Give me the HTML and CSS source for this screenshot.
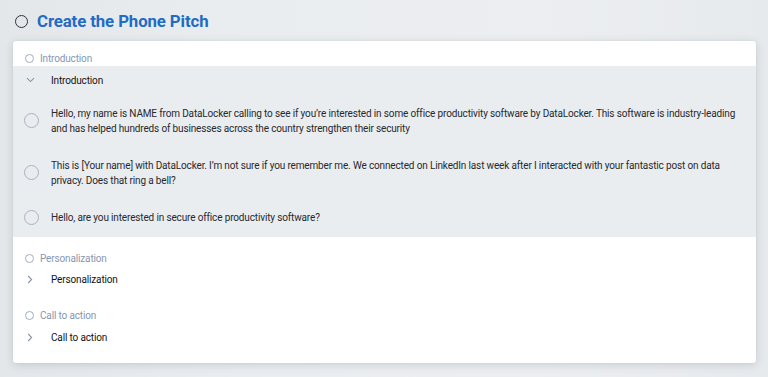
FILE: index.html
```html
<!DOCTYPE html>
<html>
<head>
<meta charset="utf-8">
<link rel="stylesheet" href="styles.css">
</head>
<body>
<div class="page">
  <header class="title-bar">
    <span class="title-circle"></span>
    <h1 class="title">Create the Phone Pitch</h1>
  </header>
  <div class="card">
    <section class="section">
      <div class="section-head"><span class="small-circle"></span><span class="section-label">Introduction</span></div>
      <div class="group open">
        <div class="group-row">
          <span class="chev">
            <svg width="9" height="6" viewBox="0 0 9 6"><path d="M1 1.2 L4.5 4.6 L8 1.2" fill="none" stroke="#8b95a1" stroke-width="1.1"/></svg>
          </span>
          <span class="group-label">Introduction</span>
        </div>
        <div class="item"><span class="item-circle"></span><p class="item-text">Hello, my name is NAME from DataLocker calling to see if you’re interested in some office productivity software by DataLocker. This software is industry-leading and has helped hundreds of businesses across the country strengthen their security</p></div>
        <div class="item"><span class="item-circle"></span><p class="item-text">This is [Your name] with DataLocker. I’m not sure if you remember me. We connected on LinkedIn last week after I interacted with your fantastic post on data privacy. Does that ring a bell?</p></div>
        <div class="item"><span class="item-circle"></span><p class="item-text">Hello, are you interested in secure office productivity software?</p></div>
      </div>
    </section>
    <section class="section">
      <div class="section-head"><span class="small-circle"></span><span class="section-label">Personalization</span></div>
      <div class="group">
        <div class="group-row">
          <span class="chev">
            <svg width="6" height="9" viewBox="0 0 6 9"><path d="M1.2 1 L4.6 4.5 L1.2 8" fill="none" stroke="#8b95a1" stroke-width="1.1"/></svg>
          </span>
          <span class="group-label">Personalization</span>
        </div>
      </div>
    </section>
    <section class="section">
      <div class="section-head"><span class="small-circle"></span><span class="section-label">Call to action</span></div>
      <div class="group">
        <div class="group-row">
          <span class="chev">
            <svg width="6" height="9" viewBox="0 0 6 9"><path d="M1.2 1 L4.6 4.5 L1.2 8" fill="none" stroke="#8b95a1" stroke-width="1.1"/></svg>
          </span>
          <span class="group-label">Call to action</span>
        </div>
      </div>
    </section>
  </div>
</div>
</body>
</html>
```

FILE: styles.css
```css
* { box-sizing: border-box; }
html, body { margin: 0; padding: 0; }
body {
  background: linear-gradient(90deg, #e4e7ea 0%, #eaedf0 30%, #eceef1 70%, #e7eaed 100%);
  font-family: Roboto, "Liberation Sans", sans-serif;
  width: 768px;
  height: 377px;
  overflow: hidden;
}
.page { padding: 0 12px 0 13px; }
.title-bar {
  height: 41px;
  display: flex;
  align-items: center;
  padding-left: 2px;
  padding-top: 1px;
}
.title-circle {
  width: 13px;
  height: 13px;
  border: 1.8px solid #2f3338;
  border-radius: 50%;
  flex: none;
}
.title {
  margin: 0 0 0 9px;
  font-size: 16.8px;
  font-weight: 700;
  color: #1f6cc4;
  letter-spacing: -0.1px;
}
.card {
  width: 743px;
  background: #fff;
  border-radius: 3px;
  box-shadow: 0 2px 10px rgba(40, 50, 60, 0.16), 0 0 2px rgba(40, 50, 60, 0.08);
  padding-bottom: 7px;
  overflow: hidden;
}
.section { padding-bottom: 4px; }
.section-head {
  height: 25px;
  padding-top: 10px;
  padding-left: 12px;
  display: flex;
  align-items: center;
  line-height: 15px;
}
.small-circle {
  width: 9px;
  height: 9px;
  border: 1.2px solid #a0adbe;
  border-radius: 50%;
  flex: none;
}
.section-label {
  margin-left: 6px;
  font-size: 10px;
  letter-spacing: -0.15px;
  color: #8797b0;
}
.group.open { background: #eaedf0; padding-bottom: 1px; }
.group-row {
  height: 28.5px;
  display: flex;
  align-items: center;
  padding-left: 12px;
}
.chev {
  width: 10px;
  display: flex;
  justify-content: center;
  flex: none;
}
.group-label {
  margin-left: 16px;
  font-size: 10px;
  letter-spacing: -0.15px;
  color: #111316;
}
.item {
  display: flex;
  align-items: center;
  padding: 11px 12px 11px 11px;
}
.item-circle {
  width: 15px;
  height: 15px;
  border: 1.3px solid #a6b3c4;
  border-radius: 50%;
  flex: none;
}
.item-text {
  margin: 0 0 0 12px;
  font-size: 10px;
  letter-spacing: -0.15px;
  line-height: 15px;
  color: #26292d;
}
```
